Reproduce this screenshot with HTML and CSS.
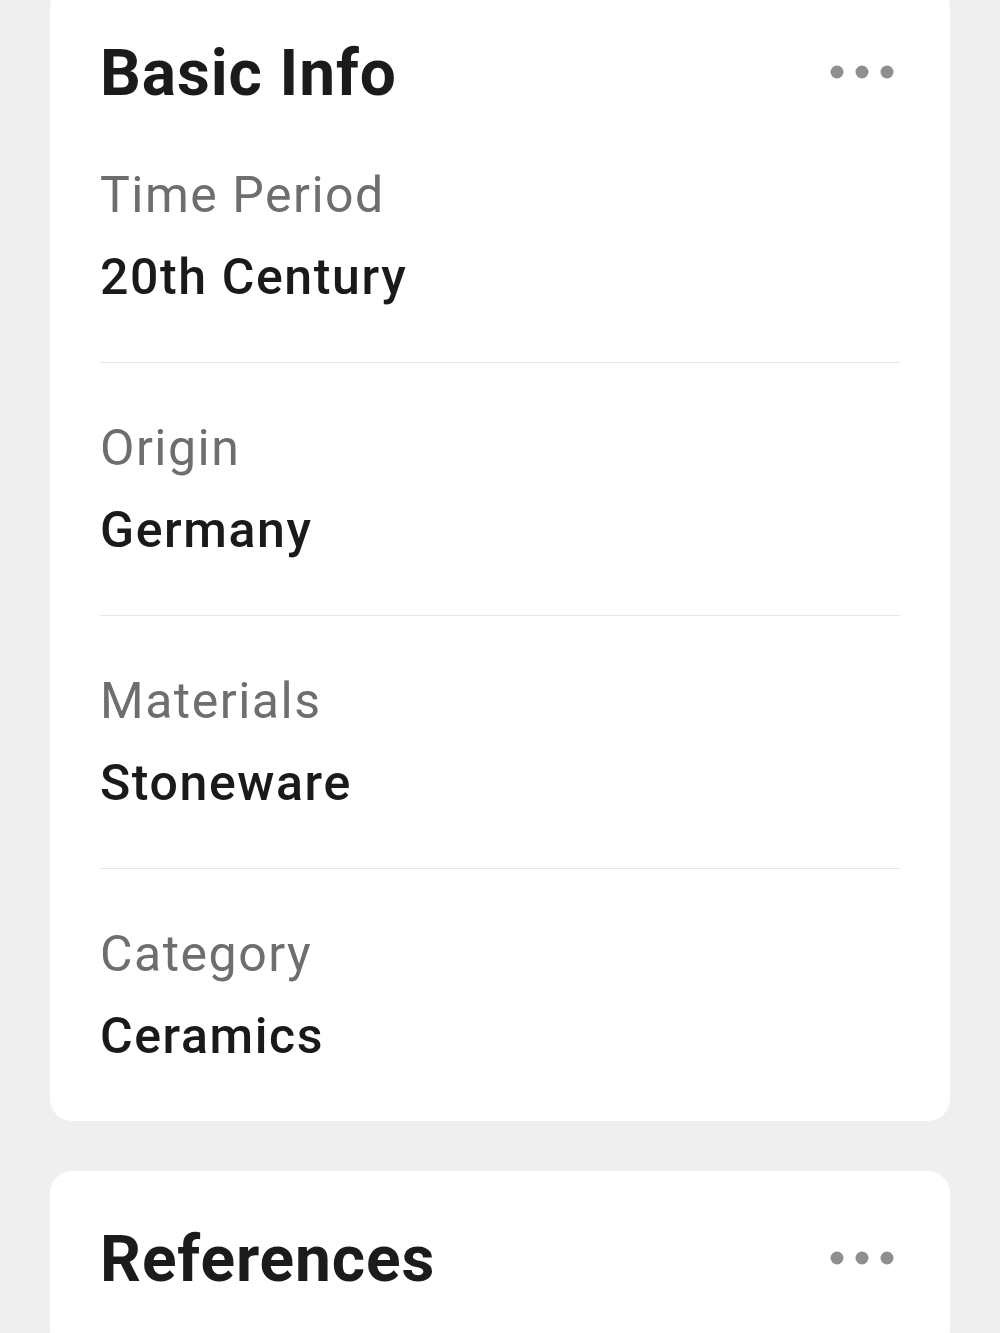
FILE: index.html
```html
<!DOCTYPE html>
<html lang="en">
<head>
    <meta charset="UTF-8">
    <meta name="viewport" content="width=device-width, initial-scale=1.0">
    <title>Artifact Details</title>
    <link rel="stylesheet" href="styles.css">
</head>
<body>
    <div class="page">
        <!-- Basic info card -->
        <section class="card first">
            <div class="card-header">
                <h2>Basic Info</h2>
                <button class="more" aria-label="More options">
                    <svg width="66" height="14" viewBox="0 0 66 14">
                        <circle cx="7" cy="7" r="6.5"></circle>
                        <circle cx="32" cy="7" r="6.5"></circle>
                        <circle cx="57" cy="7" r="6.5"></circle>
                    </svg>
                </button>
            </div>

            <div class="row">
                <div class="label">Time Period</div>
                <div class="value">20th Century</div>
            </div>
            <div class="row">
                <div class="label">Origin</div>
                <div class="value">Germany</div>
            </div>
            <div class="row">
                <div class="label">Materials</div>
                <div class="value">Stoneware</div>
            </div>
            <div class="row">
                <div class="label">Category</div>
                <div class="value">Ceramics</div>
            </div>
        </section>

        <!-- References card -->
        <section class="card">
            <div class="card-header">
                <h2>References</h2>
                <button class="more" aria-label="More options">
                    <svg width="66" height="14" viewBox="0 0 66 14">
                        <circle cx="7" cy="7" r="6.5"></circle>
                        <circle cx="32" cy="7" r="6.5"></circle>
                        <circle cx="57" cy="7" r="6.5"></circle>
                    </svg>
                </button>
            </div>
        </section>
    </div>
</body>
</html>
```

FILE: styles.css
```css
body {
    margin: 0;
    background: #efefef;
    font-family: Roboto, "Noto Sans", Arial, sans-serif;
    overflow: hidden;
}

.page {
    padding: 0 50px;
    display: flex;
    flex-direction: column;
    gap: 50px;
}

.card {
    background: #ffffff;
    border-radius: 22px;
    padding: 0 50px;
    min-height: 180px;
}

.card.first {
    margin-top: -15px;
}

.card-header {
    display: flex;
    justify-content: space-between;
    align-items: center;
    padding-top: 50px;
}

.card-header h2 {
    margin: 0;
    font-size: 64px;
    line-height: 77px;
    font-weight: 700;
    color: #1b1b1b;
    letter-spacing: 0.9px;
}

.more {
    border: none;
    background: none;
    padding: 0 4px 4px 0;
    cursor: pointer;
}

.more svg {
    display: block;
    fill: #8f8f8f;
}

.row {
    padding: 55px 0;
    border-bottom: 1px solid #e6e6e6;
}

.card-header + .row {
    padding-top: 53px;
}

.row:last-child {
    border-bottom: none;
}

.label {
    font-size: 50px;
    line-height: 60px;
    color: #6e6e6e;
    letter-spacing: 1.5px;
    margin-bottom: 22px;
}

.value {
    font-size: 50px;
    line-height: 60px;
    font-weight: 500;
    color: #1a1a1a;
    letter-spacing: 1.6px;
}
```
